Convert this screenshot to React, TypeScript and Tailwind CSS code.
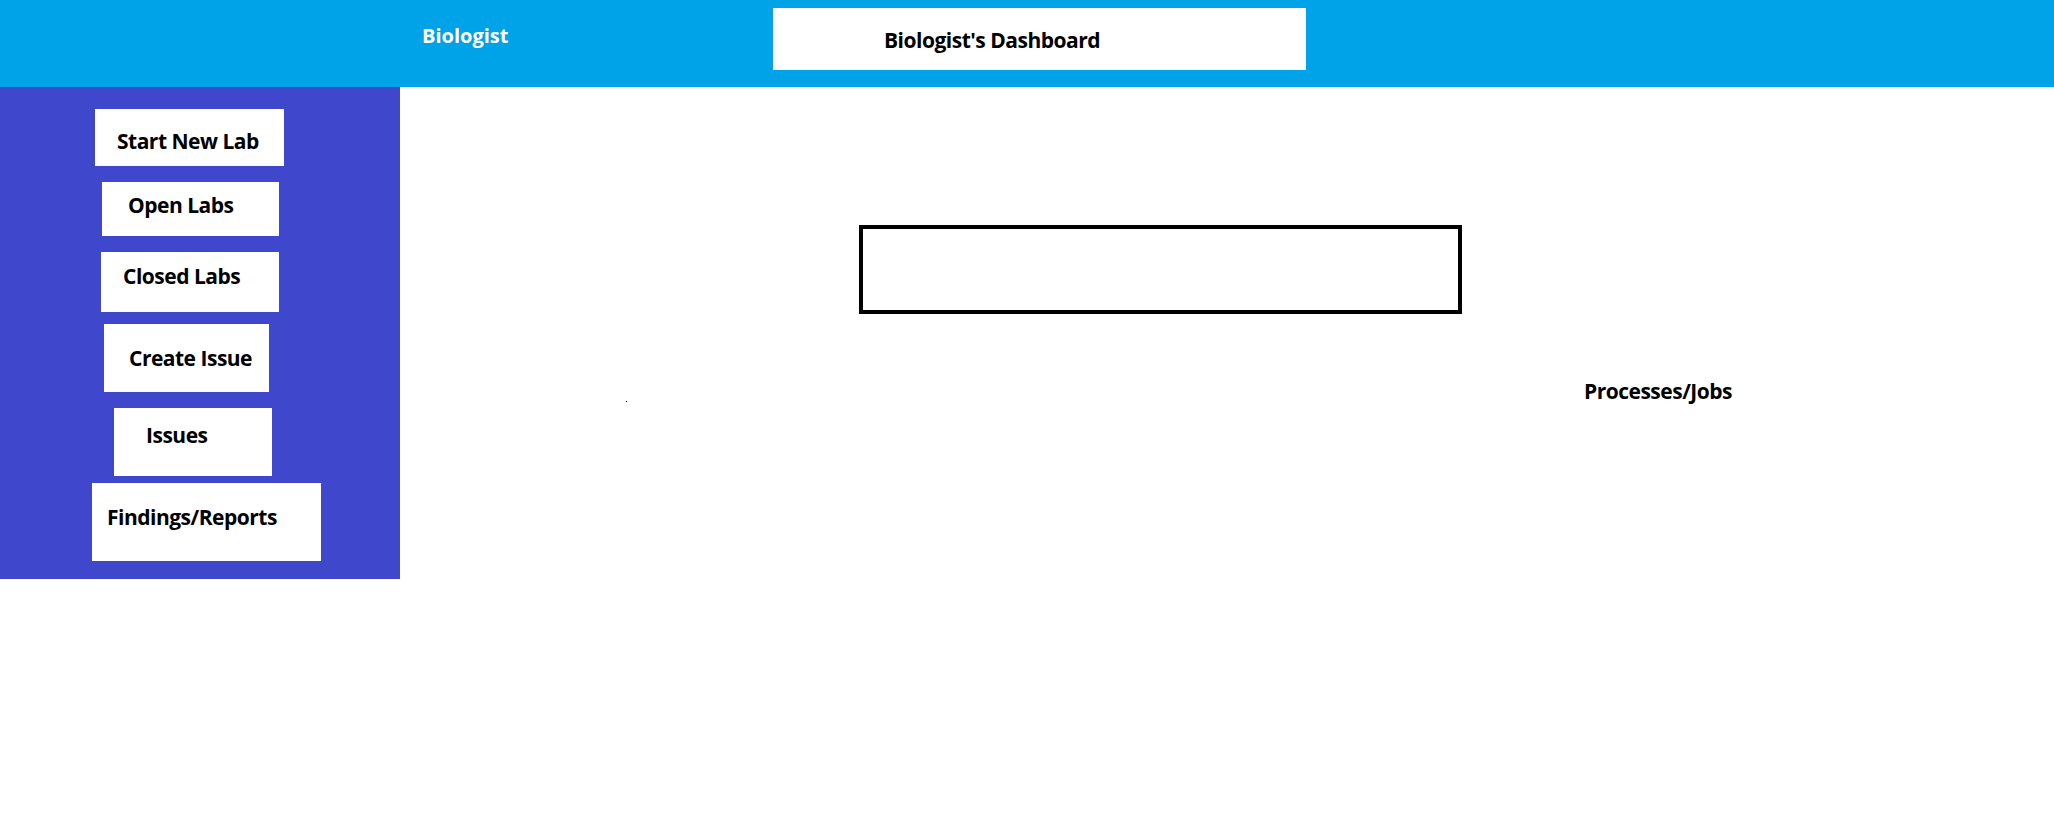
const font = { fontFamily: '"Open Sans", "Noto Sans", sans-serif' };

const navItems = [
  { label: "Start New Lab", box: "mt-[22px] ml-[95px] w-[189px] h-[57px] pt-[22px] pl-[22px]" },
  { label: "Open Labs", box: "mt-[16px] ml-[102px] w-[177px] h-[54px] pt-[13px] pl-[26px]" },
  { label: "Closed Labs", box: "mt-[16px] ml-[101px] w-[178px] h-[60px] pt-[14px] pl-[22px]" },
  { label: "Create Issue", box: "mt-[12px] ml-[104px] w-[165px] h-[68px] pt-[24px] pl-[25px]" },
  { label: "Issues", box: "mt-[16px] ml-[114px] w-[158px] h-[68px] pt-[17px] pl-[32px]" },
  { label: "Findings/Reports", box: "mt-[7px] ml-[92px] w-[229px] h-[78px] pt-[24px] pl-[15px]" },
];

function Sidebar() {
  return (
    <aside className="flex w-[400px] shrink-0 flex-col bg-[#3F48CC] pb-[18px]">
      {navItems.map((item) => (
        <div key={item.label} className={`bg-white ${item.box}`}>
          <span className="block text-[21px] font-bold leading-none tracking-[-0.5px] text-black">{item.label}</span>
        </div>
      ))}
    </aside>
  );
}

export default function App() {
  return (
    <div className="h-[818px] w-[2054px] bg-white" style={font}>
      <header className="flex h-[87px] items-start bg-[#00A2E8]">
        <div className="ml-[422px] mt-[26px] w-[88px] shrink-0 whitespace-nowrap text-[20px] font-bold leading-none text-white">
          Biologist
        </div>
        <div className="ml-[263px] mt-[8px] h-[62px] w-[533px] shrink-0 bg-white pl-[111px] pt-[22px]">
          <h1 className="text-[21px] font-bold leading-none tracking-[-0.5px] text-black">Biologist's Dashboard</h1>
        </div>
      </header>

      <div className="flex items-start">
        <Sidebar />
        <main className="flex-1">
          <div className="ml-[459px] mt-[138px] h-[89px] w-[603px] border-[4px] border-black" />
          <div className="mt-[67px] flex items-start">
            <span className="ml-[226px] mt-[20px] h-px w-px bg-black" />
            <span className="ml-[957px] text-[21px] font-bold leading-none tracking-[-0.5px] text-black">Processes/Jobs</span>
          </div>
        </main>
      </div>
    </div>
  );
}
